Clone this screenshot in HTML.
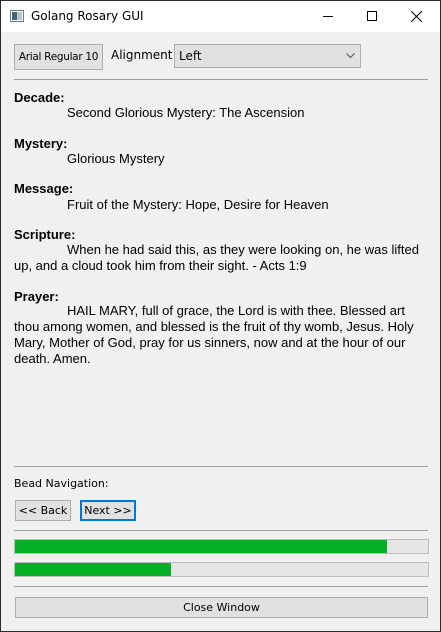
<!DOCTYPE html>
<html><head><style>
*{margin:0;padding:0;box-sizing:border-box}
body{width:441px;height:632px;background:#f0f0f0;font-family:"Liberation Sans",Arial,sans-serif;position:relative;overflow:hidden;border:1px solid #2b2b2b}
.a{position:absolute}
.t{font-size:13px;color:#000;white-space:nowrap;font-family:"Liberation Sans",Arial,sans-serif}
.b{font-weight:bold;font-size:13px}
.sep{position:absolute;left:13px;width:414px;height:1px;background:#a0a0a0}
.btn{position:absolute;background:#e1e1e1;border:1px solid #adadad;font-size:11px;text-align:center;white-space:nowrap;font-family:"DejaVu Sans","Liberation Sans",sans-serif}
.pb{position:absolute;left:13px;width:415px;height:15px;background:#e6e6e6;border:1px solid #bcbcbc}
.pf{height:100%;background:#06b025}
</style></head><body>
<div class="a" style="left:0;top:0;width:439px;height:31px;background:#fff"></div>
<svg class="a" style="left:9px;top:9px" width="14" height="12"><rect x="0.5" y="0.5" width="13" height="11" fill="#fff" stroke="#777"/><rect x="2" y="2" width="5" height="8" fill="#3c6a78"/><rect x="7" y="2" width="5" height="8" fill="#b8c8d0"/></svg>
<div class="a" style="left:30px;top:8px;font-family:'DejaVu Sans',sans-serif;font-size:12px;white-space:nowrap">Golang Rosary GUI</div>
<div class="a" style="left:322px;top:15px;width:10px;height:1px;background:#000"></div>
<div class="a" style="left:366px;top:10px;width:10px;height:10px;border:1px solid #000"></div>
<svg class="a" style="left:410px;top:10px" width="11" height="11"><path d="M0 0L11 11M11 0L0 11" stroke="#000" stroke-width="1"/></svg>

<div class="btn" style="left:13px;top:43px;width:89px;height:26px;line-height:24px;font-size:10.5px;letter-spacing:-0.3px">Arial Regular 10</div>
<div class="a" style="left:110px;top:47px;font-family:'DejaVu Sans',sans-serif;font-size:12px;white-space:nowrap">Alignment</div>
<div class="btn" style="left:173px;top:43px;width:187px;height:24px;line-height:22px;text-align:left;padding-left:4px;font-size:12px">Left</div>
<svg class="a" style="left:345px;top:52px" width="9" height="6"><path d="M0.5 0.5L4.5 4.5L8.5 0.5" stroke="#555" fill="none"/></svg>
<div class="sep" style="top:78px"></div>

<div class="a t b" style="left:13px;top:89px">Decade:</div>
<div class="a t" style="left:66px;top:104px">Second Glorious Mystery: The Ascension</div>
<div class="a t b" style="left:13px;top:135px">Mystery:</div>
<div class="a t" style="left:66px;top:150px">Glorious Mystery</div>
<div class="a t b" style="left:13px;top:180px">Message:</div>
<div class="a t" style="left:66px;top:196px">Fruit of the Mystery: Hope, Desire for Heaven</div>
<div class="a t b" style="left:13px;top:226px">Scripture:</div>
<div class="a t" style="left:13px;top:241px;line-height:16px;white-space:normal;width:418px"><span style="display:inline-block;width:53px"></span>When he had said this, as they were looking on, he was lifted up, and a cloud took him from their sight. - Acts 1:9</div>
<div class="a t b" style="left:13px;top:288px">Prayer:</div>
<div class="a t" style="left:13px;top:302px;line-height:16px;white-space:normal;width:418px"><span style="display:inline-block;width:53px"></span>HAIL MARY, full of grace, the Lord is with thee. Blessed art thou among women, and blessed is the fruit of thy womb, Jesus. Holy Mary, Mother of God, pray for us sinners, now and at the hour of our death. Amen.</div>

<div class="sep" style="top:465px"></div>
<div class="a" style="left:13px;top:476px;font-family:'DejaVu Sans',sans-serif;font-size:11px;white-space:nowrap">Bead Navigation:</div>
<div class="btn" style="left:14px;top:499px;width:56px;height:21px;line-height:19px">&lt;&lt; Back</div>
<div class="btn" style="left:79px;top:499px;width:56px;height:21px;line-height:17px;border:2px solid #0078d7">Next &gt;&gt;</div>
<div class="sep" style="top:529px"></div>
<div class="pb" style="top:538px"><div class="pf" style="width:372px"></div></div>
<div class="pb" style="top:561px"><div class="pf" style="width:156px"></div></div>
<div class="sep" style="top:585px"></div>
<div class="btn" style="left:14px;top:596px;width:413px;height:21px;line-height:19px">Close Window</div>
</body></html>
